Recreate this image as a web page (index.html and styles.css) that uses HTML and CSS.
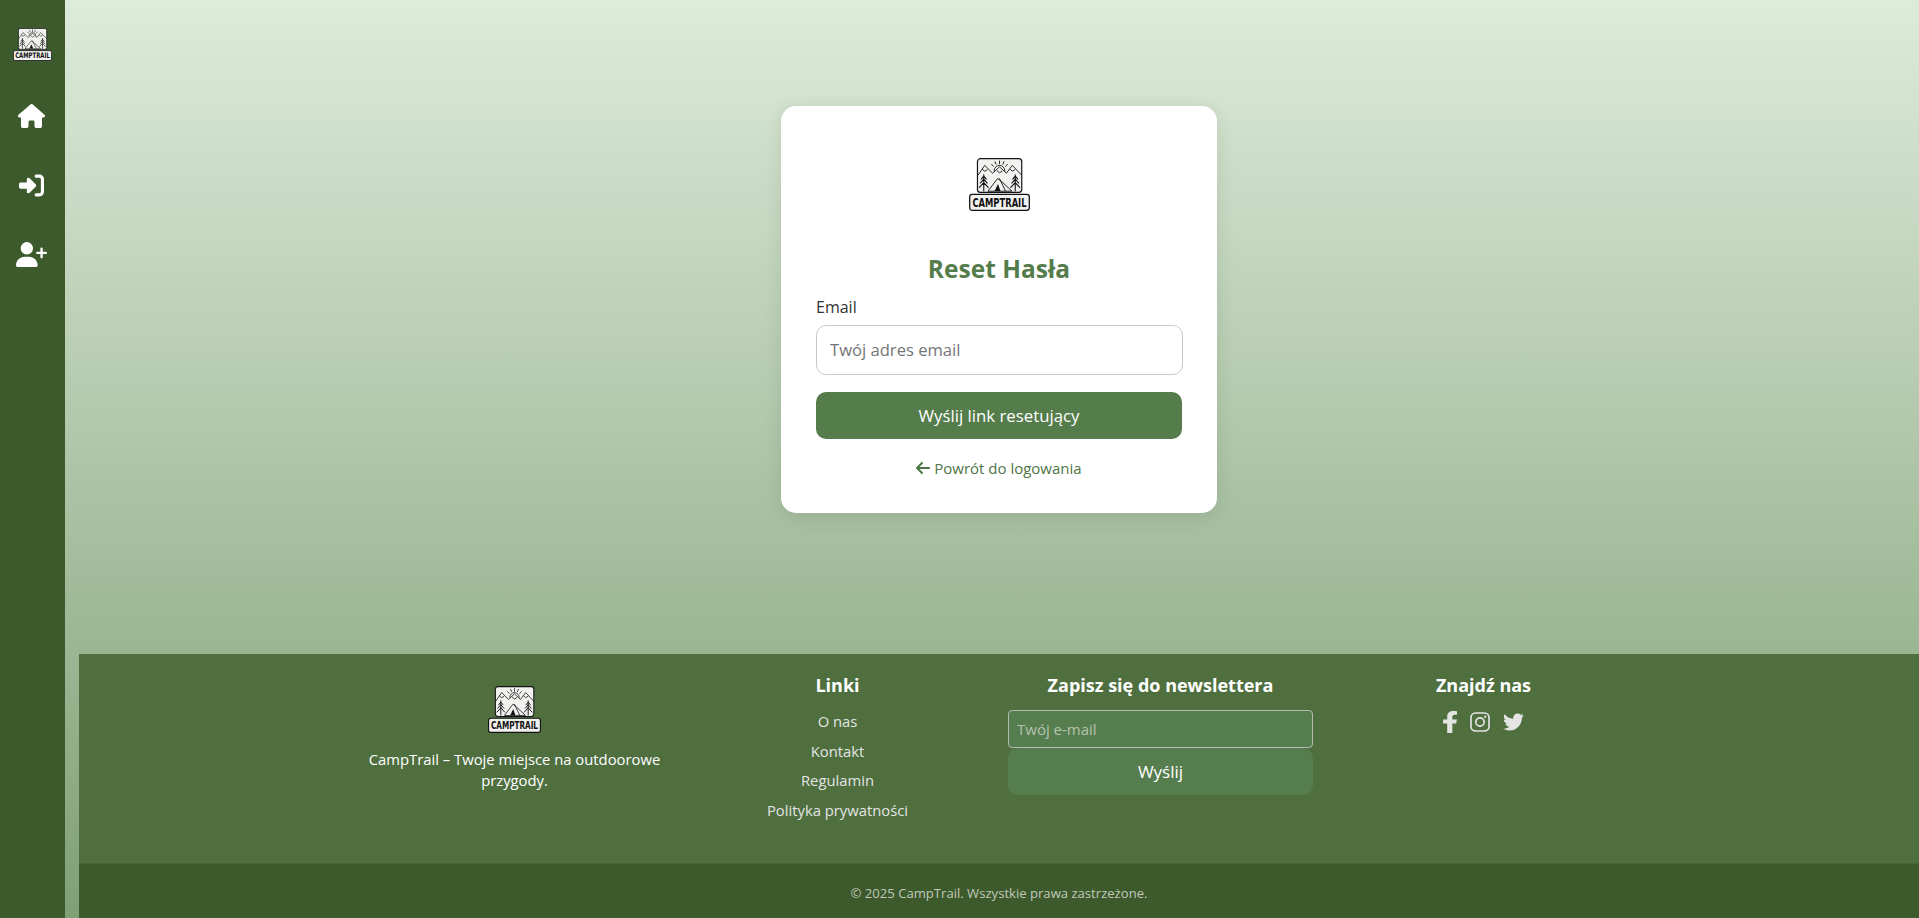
FILE: index.html
```html
<!DOCTYPE html>
<html lang="pl">
<head>
<meta charset="utf-8">
<title>CampTrail – Reset Hasła</title>
<link rel="stylesheet" href="styles.css">
</head>
<body>
<div class="shell">
  <nav class="sidebar">
    <a class="side-logo" href="#"><svg class="logo-side" viewBox="0 0 62 54" preserveAspectRatio="none"><use href="#logo"/></svg></a>
    <a class="side-link" href="#" aria-label="Strona główna">
      <svg class="ico-home" viewBox="0 0 576 512"><path d="M575.800 255.500c0 18-15 32.100-32 32.100h-32l.7 160.200c0 2.700-.2 5.400-.5 8.100V472c0 22.100-17.900 40-40 40H456c-1.100 0-2.200 0-3.300-.1c-1.400 .1-2.800 .1-4.200 .1H416 392c-22.100 0-40-17.900-40-40V448 384c0-17.700-14.300-32-32-32H256c-17.700 0-32 14.300-32 32v64 24c0 22.100-17.900 40-40 40H160 128.100c-1.500 0-3-.1-4.500-.2c-1.200 .1-2.400 .2-3.600 .2H104c-22.100 0-40-17.900-40-40V360c0-.9 0-1.900 .1-2.800V287.600H32c-18 0-32-14-32-32.100c0-9 3-17 10-24L266.400 8c7-7 15-8 22-8s15 2 21 7L564.800 231.500c8 7 12 15 11 24z"/></svg>
    </a>
    <a class="side-link" href="#" aria-label="Logowanie">
      <svg class="ico-signin" viewBox="0 0 512 512"><path d="M217.900 105.900L340.700 228.700c7.200 7.200 11.300 17.100 11.300 27.300s-4.100 20.100-11.300 27.300L217.900 406.100c-6.400 6.400-15 9.900-24 9.900c-18.700 0-33.900-15.200-33.900-33.900l0-62.100L32 320c-17.700 0-32-14.300-32-32l0-64c0-17.700 14.300-32 32-32l128 0 0-62.100c0-18.700 15.200-33.900 33.900-33.900c9 0 17.600 3.600 24 9.900zM352 416l64 0c17.700 0 32-14.300 32-32l0-256c0-17.700-14.300-32-32-32l-64 0c-17.700 0-32-14.300-32-32s14.300-32 32-32l64 0c53 0 96 43 96 96l0 256c0 53-43 96-96 96l-64 0c-17.700 0-32-14.300-32-32s14.300-32 32-32z"/></svg>
    </a>
    <a class="side-link" href="#" aria-label="Rejestracja">
      <svg class="ico-userplus" viewBox="0 0 640 512"><path d="M96 128a128 128 0 1 1 256 0A128 128 0 1 1 96 128zM0 482.300C0 383.800 79.800 304 178.300 304h91.400C368.200 304 448 383.800 448 482.300c0 16.400-13.300 29.700-29.700 29.700H29.700C13.300 512 0 498.700 0 482.300zM504 312V248H440c-13.300 0-24-10.700-24-24s10.700-24 24-24h64V136c0-13.300 10.700-24 24-24s24 10.700 24 24v64h64c13.300 0 24 10.700 24 24s-10.700 24-24 24H552v64c0 13.300-10.700 24-24 24s-24-10.700-24-24z"/></svg>
    </a>
  </nav>
  <div class="content">
    <main class="main">
      <section class="card">
        <div class="card-logo">
          <svg class="logo-card" viewBox="0 0 62 54" preserveAspectRatio="none">
            <g id="logo">
              <rect x="8.600" y="0.700" width="45" height="34.300" rx="3" fill="#f1f1ef" stroke="#111" stroke-width="1.200"/>
              <g fill="none" stroke="#111" stroke-width="0.900" stroke-linejoin="round" stroke-linecap="round">
                <path d="M25.500 13a5.500 5.500 0 0 1 11 0"/>
                <path d="M31 3v3M26.500 3.800l1 2.600M35.500 3.800l-1 2.600M23 6.500l1.800 2M39 6.500l-1.800 2"/>
                <path d="M9.500 17L16 7.500l8 8 7-6.500 7 6.500 6-8 9 9.500"/>
                <path d="M13.500 11.500l2.500 2 2.500-1.500M42 11.500l2 2 2.500-1.500M28.500 13l2.500 2 2.500-1.500"/>
                <path d="M19.500 33.500L29 21l3 2 11.500 10.500z"/>
                <path d="M31 21l6 12.500"/>
                <g stroke-width="1.100">
                  <path d="M15 17v16.500M12.500 21.500L15 18.500l2.500 3M11.500 25.500L15 21.500l3.500 4M10.500 30L15 25l4.500 5"/>
                  <path d="M47 17v16.500M44.500 21.500L47 18.500l2.500 3M43.500 25.500L47 21.500l3.500 4M42.500 30L47 25l4.500 5"/>
                </g>
              </g>
              <path d="M26 33.500l3.500-7 2.500 7z" fill="#111"/>
              <rect x="0.700" y="37" width="60.600" height="16.300" rx="2.500" fill="#f1f1ef" stroke="#111" stroke-width="1.300"/>
              <text class="logo-word" x="31" y="49.600" text-anchor="middle" textLength="55" lengthAdjust="spacingAndGlyphs">CAMPTRAIL</text>
            </g>
          </svg>
        </div>
        <h1 class="card-title">Reset Hasła</h1>
        <form class="reset-form">
          <label class="field-label" for="email">Email</label>
          <input class="field-input" id="email" type="email" placeholder="Twój adres email">
          <button class="primary-btn" type="button">Wyślij link resetujący</button>
        </form>
        <a class="back-link" href="#"><svg class="ico-back" viewBox="0 0 448 512"><path d="M9.400 233.400c-12.500 12.500-12.500 32.800 0 45.300l160 160c12.500 12.500 32.800 12.500 45.300 0s12.500-32.800 0-45.300L109.200 288 416 288c17.700 0 32-14.300 32-32s-14.300-32-32-32l-306.700 0L214.600 118.600c12.500-12.500 12.500-32.800 0-45.300s-32.800-12.500-45.300 0l-160 160z"/></svg> Powrót do logowania</a>
      </section>
    </main>
    <footer class="footer">
      <div class="footer-main">
        <div class="footer-grid">
          <div class="fcol fcol-brand">
            <svg class="logo-foot" viewBox="0 0 62 54" preserveAspectRatio="none"><use href="#logo"/></svg>
            <p class="brand-text">CampTrail – Twoje miejsce na outdoorowe przygody.</p>
          </div>
          <div class="fcol">
            <h3 class="fhead">Linki</h3>
            <ul class="flinks">
              <li><a href="#">O nas</a></li>
              <li><a href="#">Kontakt</a></li>
              <li><a href="#">Regulamin</a></li>
              <li><a href="#">Polityka prywatności</a></li>
            </ul>
          </div>
          <div class="fcol">
            <h3 class="fhead">Zapisz się do newslettera</h3>
            <form class="news-form">
              <input class="news-input" type="email" placeholder="Twój e-mail">
              <button class="news-btn" type="button">Wyślij</button>
            </form>
          </div>
          <div class="fcol">
            <h3 class="fhead">Znajdź nas</h3>
            <div class="socials">
              <a href="#" aria-label="Facebook"><svg class="ico-fb" viewBox="22 0 274 512" preserveAspectRatio="none"><path d="M279.140 288l14.220-92.660h-88.910v-60.130c0-25.350 12.420-50.060 52.240-50.060h40.420V6.260S260.430 0 225.360 0c-73.220 0-121.080 44.380-121.080 124.720v70.620H22.890V288h81.390v224h100.170V288z"/></svg></a>
              <a href="#" aria-label="Instagram"><svg class="ico-ig" viewBox="0 0 24 24"><rect x="1.200" y="1.200" width="21.600" height="21.600" rx="5.500" fill="none" stroke="currentColor" stroke-width="2"/><circle cx="12" cy="12" r="5" fill="none" stroke="currentColor" stroke-width="2"/><circle cx="18.300" cy="5.700" r="1.400" fill="currentColor"/></svg></a>
              <a href="#" aria-label="Twitter"><svg class="ico-tw" viewBox="0 48 512 416"><path d="M459.370 151.716c.325 4.548.325 9.097.325 13.645 0 138.720-105.583 298.558-298.558 298.558-59.452 0-114.680-17.219-161.137-47.106 8.447.974 16.568 1.299 25.340 1.299 49.055 0 94.213-16.568 130.274-44.832-46.132-.975-84.792-31.188-98.112-72.772 6.498.974 12.995 1.624 19.818 1.624 9.421 0 18.843-1.300 27.614-3.573-48.081-9.747-84.143-51.980-84.143-102.985v-1.299c13.969 7.797 30.214 12.670 47.431 13.319-28.264-18.843-46.781-51.005-46.781-87.391 0-19.492 5.197-37.360 14.294-52.954 51.655 63.675 129.300 105.258 216.365 109.807-1.624-7.797-2.599-15.918-2.599-24.040 0-57.828 46.782-104.934 104.934-104.934 30.213 0 57.502 12.670 76.670 33.137 23.715-4.548 46.456-13.320 66.599-25.340-7.798 24.366-24.366 44.833-46.132 57.827 21.117-2.273 41.584-8.122 60.426-16.243-14.292 20.791-32.161 39.308-52.628 54.253z"/></svg></a>
            </div>
          </div>
        </div>
      </div>
      <div class="footer-bottom">© 2025 CampTrail. Wszystkie prawa zastrzeżone.</div>
    </footer>
  </div>
</div>
</body>
</html>
```

FILE: styles.css
```css
* { box-sizing: border-box; }
html, body { margin: 0; height: 100%; }
body {
  font-family: "Open Sans", "Noto Sans", sans-serif;
  background: linear-gradient(to bottom, #ddebd9 0%, #7fa076 100%);
  color: #333;
  overflow: hidden;
}
.logo-word {
  font-family: "Liberation Sans Narrow", "DejaVu Sans Condensed", "Liberation Sans", sans-serif;
  font-weight: 700;
  font-size: 12.500px;
  fill: #111;
}

.shell { display: flex; height: 918px; }

.sidebar {
  width: 65px;
  flex: none;
  background: #3d5a2c;
  display: flex;
  flex-direction: column;
  align-items: center;
  padding-top: 28px;
}
.side-logo { display: block; height: 33px; margin-bottom: 20px; }
.logo-side { display: block; width: 39px; height: 33px; }
.side-link { height: 69.500px; width: 100%; padding-right: 2px; display: flex; align-items: center; justify-content: center; fill: #fff; }
.ico-home { width: 27px; height: 24px; }
.ico-signin { width: 25px; height: 25px; }
.ico-userplus { width: 31px; height: 25px; }

.content { flex: 1; margin-left: 14px; display: flex; flex-direction: column; min-width: 0; }
.main { height: 654px; flex: none; display: flex; justify-content: center; padding-top: 106px; }

.card {
  width: 436px;
  height: 407px;
  background: #fff;
  border-radius: 15px;
  box-shadow: 0 4px 20px rgba(0, 0, 0, 0.1);
  padding: 52px 35px 0;
  text-align: center;
}
.card-logo { height: 54px; display: flex; justify-content: center; }
.logo-card { width: 61px; height: 53px; display: block; }
.card-title { margin: 41px 0 0; font-size: 24.500px; line-height: 32px; font-weight: 700; color: #557d4c; }

.reset-form { display: flex; flex-direction: column; align-items: stretch; margin-top: 10px; text-align: left; }
.field-label { font-size: 16px; line-height: 24px; color: #333; margin-bottom: 6px; }
.field-input {
  width: calc(100% + 1px);
  height: 50px;
  border: 1px solid #c8c8c8;
  border-radius: 10px;
  padding: 0 13px 2px;
  font: inherit;
  font-size: 16.600px;
  outline: none;
  background: #fff;
}
.field-input::placeholder { color: #757575; opacity: 1; }
.primary-btn {
  height: 47px;
  margin-top: 17px;
  border: 0;
  border-radius: 10px;
  background: #557d4c;
  color: #fff;
  font: inherit;
  font-size: 16.800px;
}
.back-link {
  display: block;
  margin-top: 17px;
  font-size: 15px;
  line-height: 24px;
  color: #4f7647;
  text-decoration: none;
}
.ico-back { width: 14px; height: 16px; fill: currentColor; vertical-align: -2px; }

.footer { flex: 1; display: flex; flex-direction: column; color: #fff; }
.footer-main {
  height: 210px;
  background: #4f6f3f;
  border-bottom: 1px solid #466538;
  display: flex;
  justify-content: center;
  padding-top: 19px;
}
.footer-grid { width: 1292px; display: grid; grid-template-columns: repeat(4, 1fr); align-items: start; }
.fcol { text-align: center; padding: 0 9px; }
.fcol-brand { padding-top: 13px; }
.logo-foot { width: 53px; height: 47px; display: block; margin: 0 auto; }
.brand-text { margin: 16px 0 0; font-size: 14.800px; line-height: 21px; }
.fhead { margin: 0; font-size: 18px; line-height: 24px; font-weight: 700; color: #fff; }
.flinks { list-style: none; margin: 12px 0 0; padding: 0; font-size: 14.800px; }
.flinks li { height: 29.700px; line-height: 24px; }
.flinks a { color: #e4e4e4; text-decoration: none; }
.news-form { margin-top: 13px; display: flex; flex-direction: column; }
.news-input {
  height: 38px;
  border: 1px solid #b4bab0;
  border-radius: 4px;
  background: #567d4e;
  padding: 0 8px;
  color: #fff;
  font: inherit;
  font-size: 15px;
  outline: none;
}
.news-input::placeholder { color: #b5c2b0; opacity: 1; }
.news-btn {
  height: 47px;
  border: 0;
  border-radius: 10px;
  background: #567d4e;
  color: #fff;
  font: inherit;
  font-size: 17px;
}
.socials { display: flex; justify-content: center; gap: 13px; align-items: center; height: 22px; margin-top: 14px; color: #e4e4e4; fill: #e4e4e4; }
.socials a { color: inherit; display: flex; }
.ico-fb { width: 14px; height: 22px; }
.ico-ig { width: 20px; height: 20px; }
.ico-tw { width: 21px; height: 18px; }

.footer-bottom {
  flex: 1;
  background: #3d5a2c;
  color: #c0c8ba;
  font-size: 13.100px;
  text-align: center;
  padding-top: 19px;
  line-height: 20px;
}
```
